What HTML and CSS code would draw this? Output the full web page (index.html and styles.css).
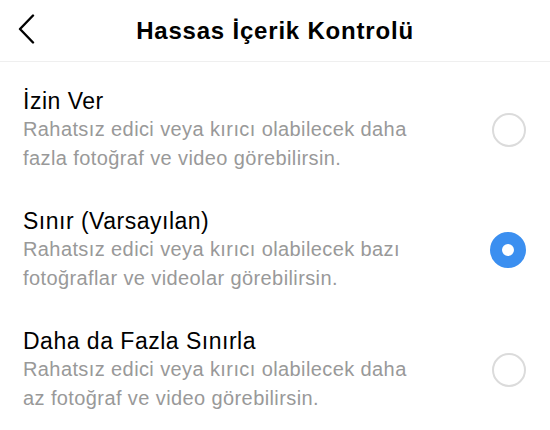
FILE: index.html
```html
<!DOCTYPE html>
<html lang="tr">
<head>
  <meta charset="UTF-8">
  <meta name="viewport" content="width=device-width, initial-scale=1.0">
  <title>Hassas İçerik Kontrolü</title>
  <link rel="stylesheet" href="styles.css">
</head>
<body>
  <header class="topbar">
    <button class="back" aria-label="Geri">
      <svg width="18" height="30" viewBox="0 0 18 30"><path d="M16 1.5 L3 15 L16 28.5" fill="none" stroke="#000" stroke-width="2.4" stroke-linecap="round" stroke-linejoin="round"/></svg>
    </button>
    <h1>Hassas İçerik Kontrolü</h1>
  </header>
  <div class="options">
    <label class="option">
      <div class="text">
        <div class="title">İzin Ver</div>
        <div class="desc">Rahatsız edici veya kırıcı olabilecek daha fazla fotoğraf ve video görebilirsin.</div>
      </div>
      <span class="radio"></span>
    </label>
    <label class="option">
      <div class="text">
        <div class="title">Sınır (Varsayılan)</div>
        <div class="desc">Rahatsız edici veya kırıcı olabilecek bazı fotoğraflar ve videolar görebilirsin.</div>
      </div>
      <span class="radio checked"></span>
    </label>
    <label class="option">
      <div class="text">
        <div class="title">Daha da Fazla Sınırla</div>
        <div class="desc">Rahatsız edici veya kırıcı olabilecek daha az fotoğraf ve video görebilirsin.</div>
      </div>
      <span class="radio"></span>
    </label>
  </div>
</body>
</html>
```

FILE: styles.css
```css
body { margin: 0; background: #fff; font-family: "Liberation Sans", Arial, sans-serif; color: #000; }
.topbar { position: relative; height: 61px; border-bottom: 1px solid #efefef; display: flex; align-items: center; justify-content: center; }
.back { position: absolute; left: 17px; top: 14px; background: none; border: none; padding: 0; cursor: pointer; }
.topbar h1 { margin: 0; font-size: 24px; font-weight: bold; letter-spacing: 0.8px; }
.options { padding-top: 8px; }
.option { display: flex; align-items: center; justify-content: space-between; padding: 17px 24px 17px 23px; }
.text { max-width: 405px; }
.title { font-size: 23px; line-height: 28px; letter-spacing: 0.5px; color: #000; }
.desc { font-size: 20px; line-height: 29px; letter-spacing: 0.4px; color: #999; }
.radio { width: 30px; height: 30px; border: 2px solid #dbdbdb; border-radius: 50%; flex-shrink: 0; }
.radio.checked { width: 12px; height: 12px; border: 12px solid #3b8ff0; background: #fff; }
```
